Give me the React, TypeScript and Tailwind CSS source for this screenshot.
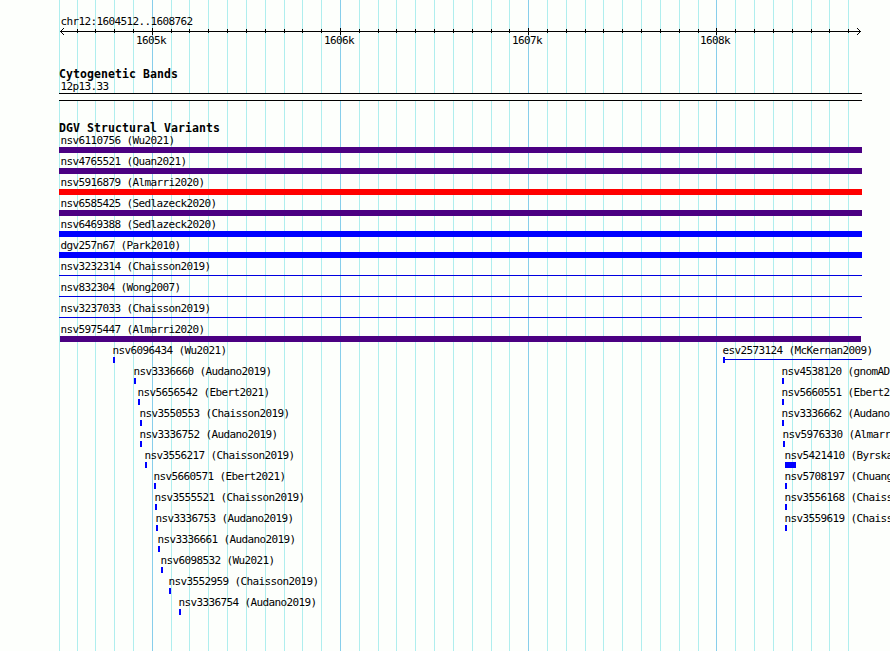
const GRID = [59, 77, 95, 114, 133, 152, 171, 189, 208, 227, 246, 265, 284, 302, 321, 340, 359, 378, 396, 415, 434, 453, 472, 491, 509, 528, 547, 566, 585, 603, 622, 641, 660, 679, 698, 716, 735, 754, 773, 792, 811, 829, 848];
const MAJOR = [152, 340, 528, 716];
const MAJOR_LABELS = ["1605k", "1606k", "1607k", "1608k"];

const WIDE = [
  { label: "nsv6110756 (Wu2021)", bar: "h-1.5 bg-[#4b0082]" },
  { label: "nsv4765521 (Quan2021)", bar: "h-1.5 bg-[#4b0082]" },
  { label: "nsv5916879 (Almarri2020)", bar: "h-1.5 bg-[#ff0000]" },
  { label: "nsv6585425 (Sedlazeck2020)", bar: "h-1.5 bg-[#4b0082]" },
  { label: "nsv6469388 (Sedlazeck2020)", bar: "h-1.5 bg-[#0000ff]" },
  { label: "dgv257n67 (Park2010)", bar: "h-1.5 bg-[#0000ff]" },
  { label: "nsv3232314 (Chaisson2019)", bar: "h-px mt-[2px] bg-[#0000e0]" },
  { label: "nsv832304 (Wong2007)", bar: "h-px mt-[2px] bg-[#0000e0]" },
  { label: "nsv3237033 (Chaisson2019)", bar: "h-px mt-[2px] bg-[#0000e0]" },
  { label: "nsv5975447 (Almarri2020)", bar: "h-1.5 ml-px mr-px bg-[#4b0082]" },
];

type Variant = { x: number; label: string; width?: number; tail?: boolean };

const LEFT: Variant[] = [
  { x: 113, label: "nsv6096434 (Wu2021)" },
  { x: 134, label: "nsv3336660 (Audano2019)" },
  { x: 138, label: "nsv5656542 (Ebert2021)" },
  { x: 140, label: "nsv3550553 (Chaisson2019)" },
  { x: 140, label: "nsv3336752 (Audano2019)" },
  { x: 145, label: "nsv3556217 (Chaisson2019)" },
  { x: 154, label: "nsv5660571 (Ebert2021)" },
  { x: 155, label: "nsv3555521 (Chaisson2019)" },
  { x: 156, label: "nsv3336753 (Audano2019)" },
  { x: 158, label: "nsv3336661 (Audano2019)" },
  { x: 161, label: "nsv6098532 (Wu2021)" },
  { x: 169, label: "nsv3552959 (Chaisson2019)" },
  { x: 179, label: "nsv3336754 (Audano2019)" },
];

const RIGHT: Variant[] = [
  { x: 723, label: "esv2573124 (McKernan2009)", tail: true },
  { x: 782, label: "nsv4538120 (gnomAD" },
  { x: 782, label: "nsv5660551 (Ebert2" },
  { x: 782, label: "nsv3336662 (Audano" },
  { x: 783, label: "nsv5976330 (Almarr" },
  { x: 785, label: "nsv5421410 (Byrska", width: 11 },
  { x: 785, label: "nsv5708197 (Chuang" },
  { x: 785, label: "nsv3556168 (Chaiss" },
  { x: 785, label: "nsv3559619 (Chaiss" },
];

const TEXT = "block whitespace-nowrap font-['DejaVu_Sans_Mono',monospace] text-[11px] leading-[13px] tracking-[-0.62px]";
const TITLE = "block whitespace-nowrap font-['DejaVu_Sans_Mono',monospace] font-bold text-[11.5px] leading-[13px] tracking-[0.08px]";

function Gridlines() {
  return (
    <div className="absolute inset-0">
      {GRID.map((x) => (
        <i
          key={x}
          className={`absolute top-0 h-full w-px ${MAJOR.includes(x) ? "bg-[#87ceeb]" : "bg-[#afeeee]"}`}
          style={{ left: x }}
        />
      ))}
    </div>
  );
}

function Ruler() {
  return (
    <div className="relative h-[53px]">
      <span className={`${TEXT} pl-[60.4px] pt-[15px]`}>chr12:1604512..1608762</span>
      <svg className="absolute left-0 top-[27px]" width="890" height="9" shapeRendering="crispEdges">
        <path d="M60 4.5H861" stroke="#000" />
        {GRID.slice(1).map((x) => (
          <path key={x} d={MAJOR.includes(x) ? `M${x + 0.5} 1V8` : `M${x + 0.5} 2V6`} stroke="#000" />
        ))}
        <path d="M60 4h1v1h-1zM61 3h1v1h-1zM61 5h1v1h-1zM62 2h1v1h-1zM62 6h1v1h-1zM63 1h1v1h-1zM63 7h1v1h-1z" />
        <path d="M860 4h1v1h-1zM859 3h1v1h-1zM859 5h1v1h-1zM858 2h1v1h-1zM858 6h1v1h-1zM857 1h1v1h-1zM857 7h1v1h-1z" />
      </svg>
      {MAJOR.map((x, i) => (
        <span key={x} className={`${TEXT} absolute top-[34px]`} style={{ left: x - 15.9 }}>
          {MAJOR_LABELS[i]}
        </span>
      ))}
    </div>
  );
}

function VariantColumn({ items }: { items: Variant[] }) {
  return (
    <div className="col-start-1 row-start-1 min-w-0">
      {items.map((v) => (
        <div key={v.label} className="h-[21px]" style={{ paddingLeft: v.x }}>
          <span className={`${TEXT} -ml-[0.5px]`}>{v.label}</span>
          <div className="flex h-1.5 items-center">
            <div className="h-1.5 shrink-0 bg-[#0000ff]" style={{ width: v.width ?? 2 }} />
            {v.tail && <div className="mb-px h-px w-[137px] bg-[#0000e0]" />}
          </div>
        </div>
      ))}
    </div>
  );
}

export default function App() {
  return (
    <div className="relative h-[651px] w-[890px] overflow-hidden bg-[#fdfffc] text-black">
      <Gridlines />
      <main className="relative">
        <Ruler />
        <section className="h-[69px] pt-[15px]">
          <h2 className={`${TITLE} pl-[59px]`}>Cytogenetic Bands</h2>
          <span className={`${TEXT} -mt-px pl-[60.4px]`}>12p13.33</span>
          <div className="ml-[59px] h-2 w-[803px] border-y border-black bg-[#fdfffc]" />
        </section>
        <section>
          <h2 className={`${TITLE} pl-[59px]`}>DGV Structural Variants</h2>
          <div className="-mt-px ml-[59px] w-[803px]">
            {WIDE.map((v) => (
              <div key={v.label} className="flow-root h-[21px]">
                <span className={`${TEXT} pl-[1.4px]`}>{v.label}</span>
                <div className={v.bar} />
              </div>
            ))}
          </div>
          <div className="grid">
            <VariantColumn items={LEFT} />
            <VariantColumn items={RIGHT} />
          </div>
        </section>
      </main>
    </div>
  );
}
